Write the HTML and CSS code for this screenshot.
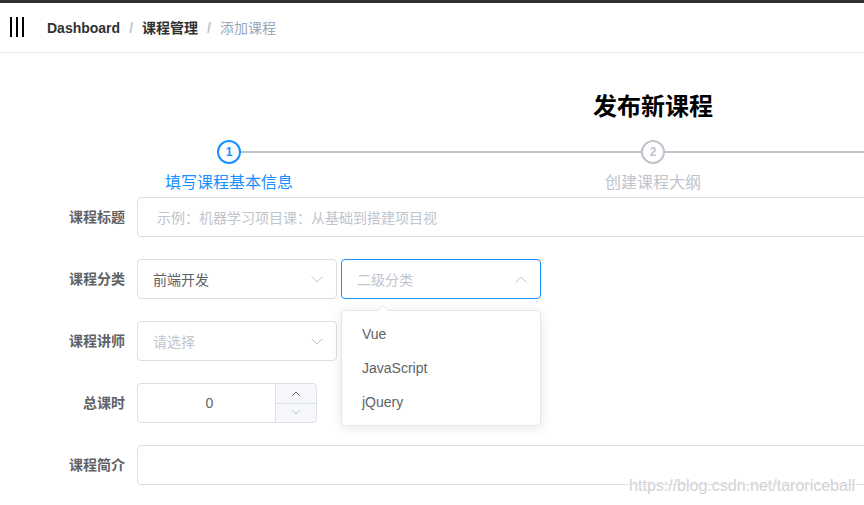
FILE: index.html
```html
<!DOCTYPE html>
<html lang="zh-CN">
<head>
<meta charset="utf-8">
<title>发布新课程</title>
<link rel="stylesheet" href="styles.css">
</head>
<body>
<div class="topbar"></div>
<header class="navbar">
  <div class="hamburger">
    <svg width="16" height="20" viewBox="0 0 16 20"><rect x="1" y="0" width="2" height="20" fill="#000"/><rect x="7" y="0" width="2" height="20" fill="#000"/><rect x="13" y="0" width="2" height="20" fill="#000"/></svg>
  </div>
  <nav class="breadcrumb">
    <span class="crumb strong en">Dashboard</span><span class="sep">/</span><span class="crumb strong">课程管理</span><span class="sep">/</span><span class="crumb current">添加课程</span>
  </nav>
</header>
<main class="app-main">
  <h2 class="title">发布新课程</h2>
  <div class="steps">
    <div class="step active">
      <div class="step-head"><div class="step-line"></div><div class="step-icon">1</div></div>
      <div class="step-title">填写课程基本信息</div>
    </div>
    <div class="step">
      <div class="step-head"><div class="step-line"></div><div class="step-icon">2</div></div>
      <div class="step-title">创建课程大纲</div>
    </div>
    <div class="step last">
      <div class="step-head"><div class="step-icon"></div></div>
    </div>
  </div>
  <form class="form">
    <div class="form-item">
      <label class="label">课程标题</label>
      <div class="control"><div class="input wide title-input"><span class="placeholder">示例：机器学习项目课：从基础到搭建项目视</span></div></div>
    </div>
    <div class="form-item">
      <label class="label">课程分类</label>
      <div class="control selects">
        <div class="select"><span class="value">前端开发</span><svg class="arrow" width="12" height="7" viewBox="0 0 12 7"><path d="M0.5 0.5 L6 6 L11.5 0.5" fill="none" stroke="#c0c4cc" stroke-width="1"/></svg></div>
        <div class="select-wrap">
          <div class="select focused"><span class="placeholder">二级分类</span><svg class="arrow" width="12" height="7" viewBox="0 0 12 7"><path d="M0.5 6.5 L6 1 L11.5 6.5" fill="none" stroke="#c0c4cc" stroke-width="1"/></svg></div>
          <div class="dropdown">
            <div class="popper-arrow"></div>
            <ul class="options">
              <li>Vue</li>
              <li>JavaScript</li>
              <li>jQuery</li>
            </ul>
          </div>
        </div>
      </div>
    </div>
    <div class="form-item">
      <label class="label">课程讲师</label>
      <div class="control"><div class="select"><span class="placeholder">请选择</span><svg class="arrow" width="12" height="7" viewBox="0 0 12 7"><path d="M0.5 0.5 L6 6 L11.5 0.5" fill="none" stroke="#c0c4cc" stroke-width="1"/></svg></div></div>
    </div>
    <div class="form-item">
      <label class="label">总课时</label>
      <div class="control">
        <div class="input-number">
          <span class="num">0</span>
          <div class="num-controls">
            <span class="inc"><svg width="8" height="5" viewBox="0 0 8 5"><path d="M0.5 4.5 L4 1 L7.5 4.5" fill="none" stroke="#606266" stroke-width="1"/></svg></span>
            <span class="dec"><svg width="8" height="5" viewBox="0 0 8 5"><path d="M0.5 0.5 L4 4 L7.5 0.5" fill="none" stroke="#c0c4cc" stroke-width="1"/></svg></span>
          </div>
        </div>
      </div>
    </div>
    <div class="form-item">
      <label class="label">课程简介</label>
      <div class="control"><div class="input wide"></div></div>
    </div>
  </form>
</main>
<div class="watermark">https://blog.csdn.net/taroriceball</div>
</body>
</html>
```
FILE: styles.css
```css
* { box-sizing: border-box; }
html, body { margin: 0; padding: 0; }
body {
  width: 864px;
  height: 505px;
  overflow: hidden;
  position: relative;
  background: #fff;
  font-family: "Liberation Sans", "Noto Sans CJK SC", sans-serif;
  font-size: 14px;
  color: #606266;
}
.topbar { height: 3px; background: #2f2f2f; }
.navbar {
  height: 50px;
  border-bottom: 1px solid #e6e6e6;
  display: flex;
  align-items: center;
  padding-left: 9px;
}
.hamburger { width: 16px; height: 20px; display: flex; margin-top: -1px; }
.breadcrumb { margin-left: 22px; display: flex; align-items: center; line-height: 20px; }
.crumb.strong { font-weight: 700; color: #303133; }
.crumb.current { color: #97a8be; }
.sep { margin: 0 9px; color: #c0c4cc; font-weight: 700; }

.app-main { width: 1306px; padding-top: 37px; }
.title {
  margin: 0;
  text-align: center;
  font-size: 24px;
  line-height: 34px;
  font-weight: 700;
  color: #000;
}
.steps { display: flex; margin: 16px 17px 0; }
.step { flex: 1; text-align: center; }
.step-head { position: relative; height: 24px; }
.step-line {
  position: absolute;
  top: 11px;
  left: 50%;
  right: -50%;
  height: 2px;
  background: #c0c4cc;
}
.step-icon {
  position: relative;
  z-index: 1;
  display: inline-flex;
  align-items: center;
  justify-content: center;
  width: 24px;
  height: 24px;
  border: 2px solid #c0c4cc;
  border-radius: 50%;
  background: #fff;
  color: #c0c4cc;
  font-size: 12px;
  font-weight: 700;
}
.step.active .step-icon { border-color: #1890ff; color: #1890ff; }
.step-title { margin-top: 7px; font-size: 16px; line-height: 24px; color: #c0c4cc; }
.step.active .step-title { color: #1890ff; }

.form { margin: 2px 0 0 17px; }
.form-item { display: flex; margin-bottom: 22px; }
.label {
  width: 120px;
  padding-right: 12px;
  text-align: right;
  line-height: 40px;
  font-weight: 700;
  color: #606266;
}
.control { display: flex; }
.selects { gap: 4px; }
.input {
  height: 40px;
  border: 1px solid #dcdfe6;
  border-radius: 4px;
  display: flex;
  align-items: center;
  padding: 0 15px;
}
.input.wide { width: 1000px; }
.title-input { padding-left: 19px; }
.placeholder { color: #c0c4cc; }
.value { color: #606266; }
.select {
  position: relative;
  width: 200px;
  height: 40px;
  border: 1px solid #dcdfe6;
  border-radius: 4px;
  display: flex;
  align-items: center;
  padding: 0 15px;
}
.select.focused { border-color: #1890ff; }
.select .arrow { position: absolute; right: 13px; top: 16px; }
.select-wrap { position: relative; }
.dropdown {
  position: absolute;
  left: 0;
  top: 51px;
  width: 200px;
  background: #fff;
  border: 1px solid #e4e7ed;
  border-radius: 4px;
  box-shadow: 0 2px 12px rgba(0, 0, 0, 0.1);
  z-index: 10;
}
.popper-arrow {
  position: absolute;
  top: -6px;
  left: 35px;
  width: 0;
  height: 0;
  border-left: 6px solid transparent;
  border-right: 6px solid transparent;
  border-bottom: 6px solid #e4e7ed;
}
.popper-arrow::after {
  content: "";
  position: absolute;
  left: -6px;
  top: 1px;
  border-left: 6px solid transparent;
  border-right: 6px solid transparent;
  border-bottom: 6px solid #fff;
}
.options { list-style: none; margin: 0; padding: 6px 0; }
.options li {
  height: 34px;
  line-height: 34px;
  padding: 0 20px;
  color: #606266;
  font-size: 14px;
}
.input-number {
  position: relative;
  width: 180px;
  height: 40px;
  border: 1px solid #dcdfe6;
  border-radius: 4px;
  display: flex;
  align-items: center;
  justify-content: center;
  padding: 0 50px 0 15px;
}
.num { color: #606266; font-size: 14px; }
.num-controls {
  position: absolute;
  right: 0;
  top: 0;
  bottom: 0;
  width: 41px;
  border-left: 1px solid #dcdfe6;
  display: flex;
  flex-direction: column;
}
.num-controls span {
  flex: 1;
  display: flex;
  align-items: center;
  justify-content: center;
  background: #f5f7fa;
}
.num-controls .inc { border-bottom: 1px solid #dcdfe6; border-top-right-radius: 4px; }
.num-controls .dec { border-bottom-right-radius: 4px; }
.watermark {
  position: absolute;
  right: 9px;
  top: 476px;
  font-family: "Liberation Sans", sans-serif;
  font-size: 16px;
  line-height: 20px;
  color: #d2d2d2;
  text-shadow: 0 0 2px #fff, 0 0 2px #fff;
}
```
